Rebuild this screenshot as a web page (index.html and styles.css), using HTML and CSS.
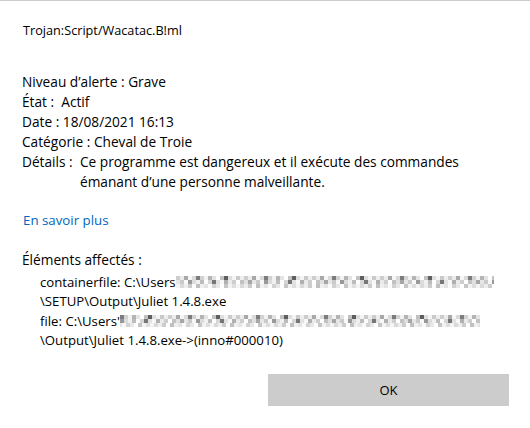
FILE: index.html
```html
<!DOCTYPE html>
<html lang="fr">
<head>
<meta charset="utf-8">
<title>Trojan:Script/Wacatac.B!ml</title>
<link rel="stylesheet" href="styles.css">
</head>
<body>
<div class="dialog">
  <div class="title">Trojan:Script/Wacatac.B!ml</div>
  <div class="props">
    <div class="row">Niveau d’alerte : Grave</div>
    <div class="row">État : &nbsp;Actif</div>
    <div class="row">Date : 18/08/2021 16:13</div>
    <div class="row">Catégorie : Cheval de Troie</div>
    <div class="row details">
      <span class="label">Détails :</span>
      <span class="value">Ce programme est dangereux et il exécute des commandes<br>émanant d’une personne malveillante.</span>
    </div>
  </div>
  <a class="link" href="#">En savoir plus</a>
  <div class="affected">Éléments affectés :</div>
  <div class="items">
    <div class="item">
      <div class="line">containerfile: C:\Users<span class="mosaic m1"></span></div>
      <div class="line">\SETUP\Output\Juliet 1.4.8.exe</div>
    </div>
    <div class="item">
      <div class="line">file: C:\Users'<span class="mosaic m2"></span></div>
      <div class="line">\Output\Juliet 1.4.8.exe-&gt;(inno#000010)</div>
    </div>
  </div>
  <div class="footer">
    <button class="ok" type="button">OK</button>
  </div>
</div>
</body>
</html>
```
FILE: styles.css
```css
html, body {
  margin: 0;
  padding: 0;
  background: #ffffff;
}
body {
  font-family: "Open Sans", "Noto Sans", "Liberation Sans", sans-serif;
  color: #000;
}
.dialog {
  width: 530px;
  height: 428px;
  box-sizing: border-box;
  border-top: 1px solid #cccccc;
  padding: 0 0 0 22px;
}
.title {
  font-size: 12.7px;
  line-height: 16px;
  margin-top: 21px;
  margin-left: 1px;
}
.props {
  margin-top: 34px;
  font-size: 13.7px;
  line-height: 20px;
}
.details {
  display: flex;
}
.label {
  width: 58px;
  flex: none;
}
.link {
  display: block;
  margin-top: 19px;
  font-size: 13.3px;
  line-height: 18px;
  color: #0067c0;
  text-decoration: none;
  width: max-content;
  margin-left: 1px;
}
.affected {
  margin-top: 21px;
  font-size: 13.7px;
  line-height: 20px;
}
.items {
  margin-top: 3px;
  padding-left: 18px;
  font-size: 13.2px;
  line-height: 19px;
}
.item + .item {
  margin-top: 1px;
}
.mosaic {
  display: inline-block;
  height: 12px;
  vertical-align: -1px;
  background-repeat: repeat-x;
  background-size: 68px 4px, 76px 4px, 60px 4px;
  background-position: 0 0, 0 4px, 0 8px;
  background-image:
    linear-gradient(90deg, #cdcdcd 0 4px, #ececec 4px 8px, #a8a8a8 8px 12px, #f6f6f6 12px 16px, #dadada 16px 20px, #7c7c7c 20px 24px, #d2d2d2 24px 28px, #f2f2f2 28px 32px, #b4b4b4 32px 36px, #e4e4e4 36px 40px, #fff 40px 44px, #c2c2c2 44px 48px, #5e5e5e 48px 52px, #dedede 52px 56px, #f4f4f4 56px 60px, #cacaca 60px 64px, #eeeeee 64px 68px),
    linear-gradient(90deg, #e6e6e6 0 4px, #cacaca 4px 8px, #f8f8f8 8px 12px, #999 12px 16px, #dcdcdc 16px 20px, #f0f0f0 20px 24px, #bcbcbc 24px 28px, #fcfcfc 28px 32px, #d6d6d6 32px 36px, #767676 36px 40px, #e2e2e2 40px 44px, #f8f8f8 44px 48px, #b0b0b0 48px 52px, #eaeaea 52px 56px, #cecece 56px 60px, #ffffff 60px 64px, #c2c2c2 64px 68px, #e0e0e0 68px 72px, #a6a6a6 72px 76px),
    linear-gradient(90deg, #f4f4f4 0 4px, #dadada 4px 8px, #eeeeee 8px 12px, #cccccc 12px 16px, #fcfcfc 16px 20px, #c0c0c0 20px 24px, #f0f0f0 24px 28px, #e4e4e4 28px 32px, #fafafa 32px 36px, #d2d2d2 36px 40px, #e8e8e8 40px 44px, #ffffff 44px 48px, #c6c6c6 48px 52px, #f2f2f2 52px 56px, #dedede 56px 60px);
}
.m1 {
  width: 318px;
}
.m2 {
  width: 360px;
  background-position: -20px 0, -12px 4px, -30px 8px;
}
.footer {
  margin-top: 24px;
  padding-left: 246px;
}
.ok {
  display: block;
  width: 241px;
  height: 32px;
  border: none;
  background: #cccccc;
  color: #000;
  font-family: "Open Sans", "Noto Sans", "Liberation Sans", sans-serif;
  font-size: 13px;
  padding: 0;
}
```
